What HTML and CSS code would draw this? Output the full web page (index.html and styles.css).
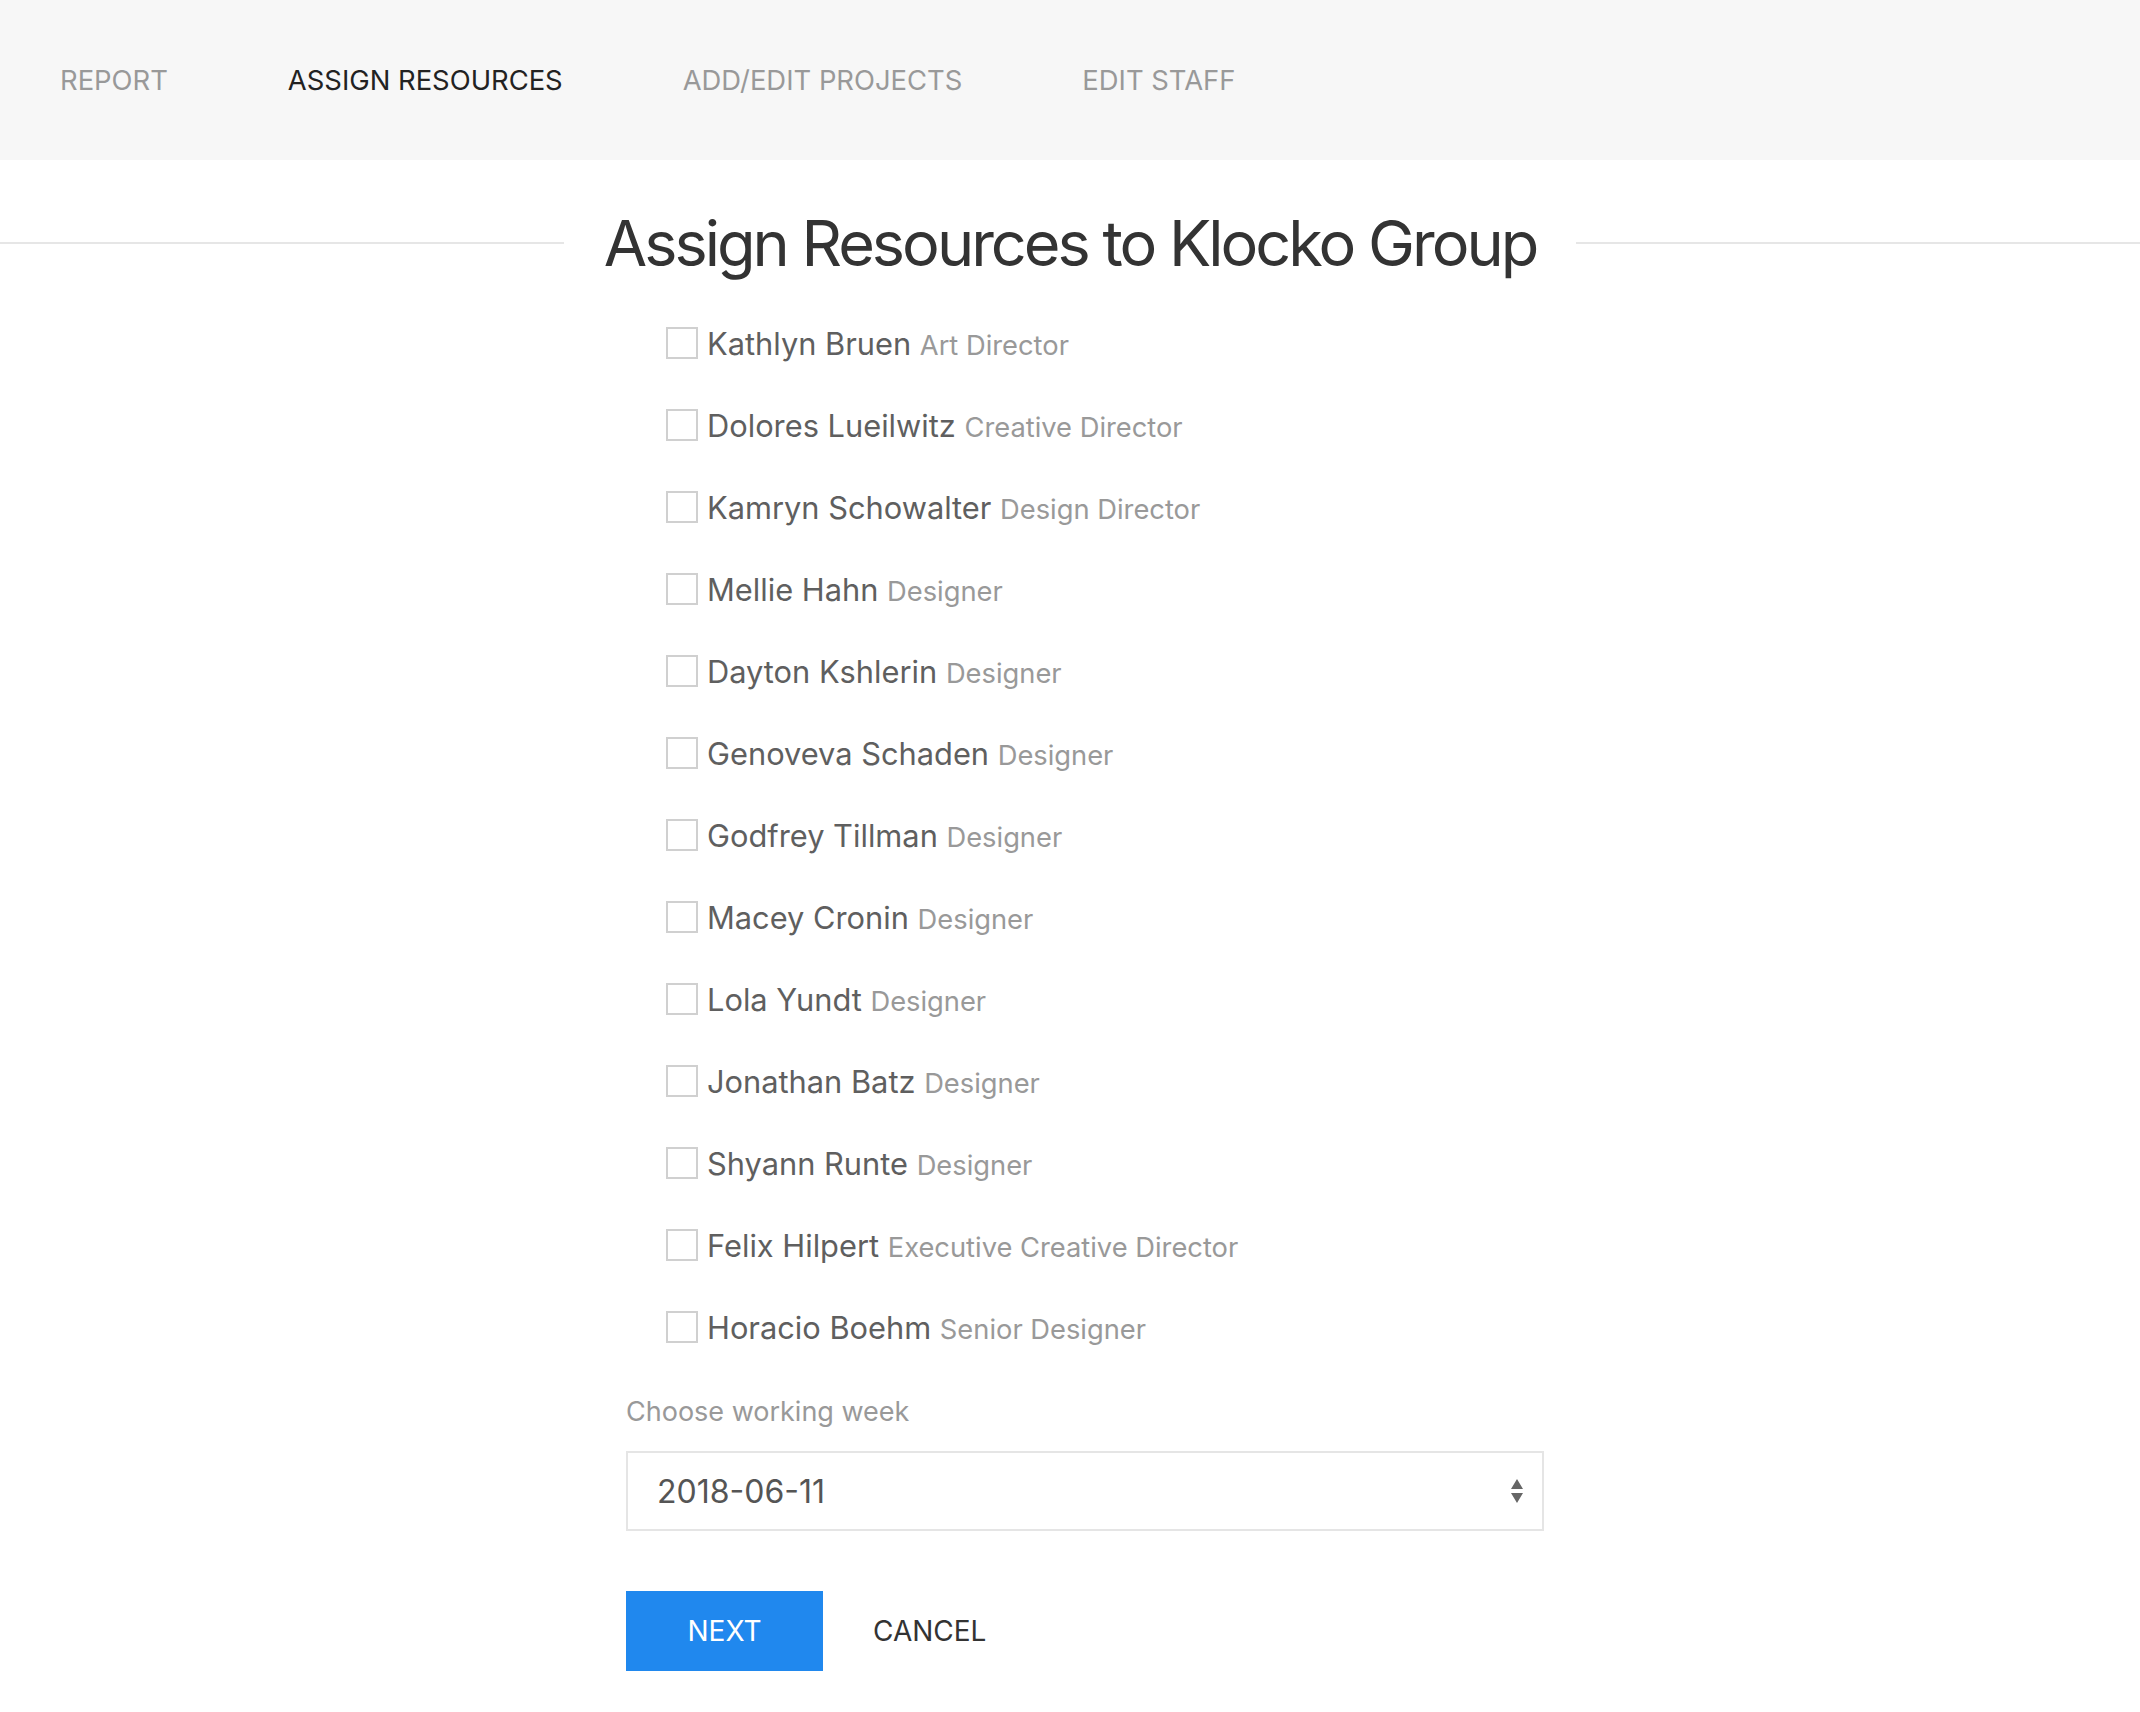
FILE: index.html
```html
<!DOCTYPE html>
<html lang="en">
<head>
<meta charset="utf-8">
<title>Assign Resources</title>
<link rel="stylesheet" href="styles.css">
</head>
<body>
<nav class="nav">
  <a class="nav-item">REPORT</a>
  <a class="nav-item active">ASSIGN RESOURCES</a>
  <a class="nav-item">ADD/EDIT PROJECTS</a>
  <a class="nav-item">EDIT STAFF</a>
</nav>
<div class="title-row">
  <h1 class="title">Assign Resources to Klocko Group</h1>
</div>
<form class="form">
  <ul class="staff">
    <li class="row"><span class="box"></span><span class="text"><span class="name">Kathlyn Bruen</span> <span class="role">Art Director</span></span></li>
    <li class="row"><span class="box"></span><span class="text"><span class="name">Dolores Lueilwitz</span> <span class="role">Creative Director</span></span></li>
    <li class="row"><span class="box"></span><span class="text"><span class="name">Kamryn Schowalter</span> <span class="role">Design Director</span></span></li>
    <li class="row"><span class="box"></span><span class="text"><span class="name">Mellie Hahn</span> <span class="role">Designer</span></span></li>
    <li class="row"><span class="box"></span><span class="text"><span class="name">Dayton Kshlerin</span> <span class="role">Designer</span></span></li>
    <li class="row"><span class="box"></span><span class="text"><span class="name">Genoveva Schaden</span> <span class="role">Designer</span></span></li>
    <li class="row"><span class="box"></span><span class="text"><span class="name">Godfrey Tillman</span> <span class="role">Designer</span></span></li>
    <li class="row"><span class="box"></span><span class="text"><span class="name">Macey Cronin</span> <span class="role">Designer</span></span></li>
    <li class="row"><span class="box"></span><span class="text"><span class="name">Lola Yundt</span> <span class="role">Designer</span></span></li>
    <li class="row"><span class="box"></span><span class="text"><span class="name">Jonathan Batz</span> <span class="role">Designer</span></span></li>
    <li class="row"><span class="box"></span><span class="text"><span class="name">Shyann Runte</span> <span class="role">Designer</span></span></li>
    <li class="row"><span class="box"></span><span class="text"><span class="name">Felix Hilpert</span> <span class="role">Executive Creative Director</span></span></li>
    <li class="row"><span class="box"></span><span class="text"><span class="name">Horacio Boehm</span> <span class="role">Senior Designer</span></span></li>
  </ul>
  <div class="label">Choose working week</div>
  <div class="select">
    <span class="select-value">2018-06-11</span>
    <svg class="arrows" width="12" height="25" viewBox="0 0 12 25"><path d="M6 0 L12 10 L0 10 Z M0 14 L12 14 L6 24 Z" fill="#666"/></svg>
  </div>
  <div class="actions">
    <button type="button" class="btn-next">NEXT</button>
    <button type="button" class="btn-cancel">CANCEL</button>
  </div>
</form>
</body>
</html>
```

FILE: styles.css
```css
* { box-sizing: border-box; }
html, body { margin: 0; padding: 0; background: #fff; }
body { font-family: Inter, "Noto Sans", "Liberation Sans", sans-serif; color: #333; }

.nav {
  display: flex;
  align-items: center;
  height: 160px;
  background: #f7f7f7;
}
.nav-item {
  font-size: 27.4px;
  line-height: 40px;
  color: #999;
  padding: 0 60px;
  text-decoration: none;
}
.nav-item.active { color: #222; }

.title-row {
  display: flex;
  align-items: center;
  margin-top: 43px;
}
.title-row::before, .title-row::after {
  content: "";
  flex: 1;
  height: 2px;
  background: #e6e6e6;
}
.title {
  margin: 0 40px;
  font-size: 63px;
  font-weight: 400;
  line-height: 80px;
  letter-spacing: -3px;
  color: #333;
}

.form {
  width: 918px;
  margin: 19px 0 0 calc(50% - 444px);
}
.staff {
  list-style: none;
  margin: 0;
  padding: 0 0 0 40px;
}
.row {
  display: flex;
  align-items: center;
  height: 82px;
}
.box {
  width: 32px;
  height: 32px;
  border: 2px solid #d0d0d0;
  margin-right: 9px;
  flex: none;
}
.text { white-space: nowrap; font-size: 30.8px; }
.name { font-size: 30.8px; color: #5f5f5f; }
.role { font-size: 27.3px; color: #999; }

.label {
  margin-top: 24px;
  font-size: 27px;
  line-height: 40px;
  color: #999;
}
.select {
  margin-top: 19px;
  height: 80px;
  border: 2px solid #e5e5e5;
  display: flex;
  align-items: center;
  justify-content: space-between;
  padding: 0 19px 0 29px;
}
.select-value { font-size: 32px; color: #555; }

.actions {
  display: flex;
  align-items: center;
  margin-top: 60px;
  gap: 50px;
}
.btn-next {
  height: 80px;
  width: 197px;
  border: 0;
  background: #2088ee;
  color: #fff;
  font: 400 28px Inter, "Noto Sans", sans-serif;
  padding: 0;
}
.btn-cancel {
  border: 0;
  background: none;
  color: #333;
  font: 400 28px Inter, "Noto Sans", sans-serif;
  padding: 0;
}
```
